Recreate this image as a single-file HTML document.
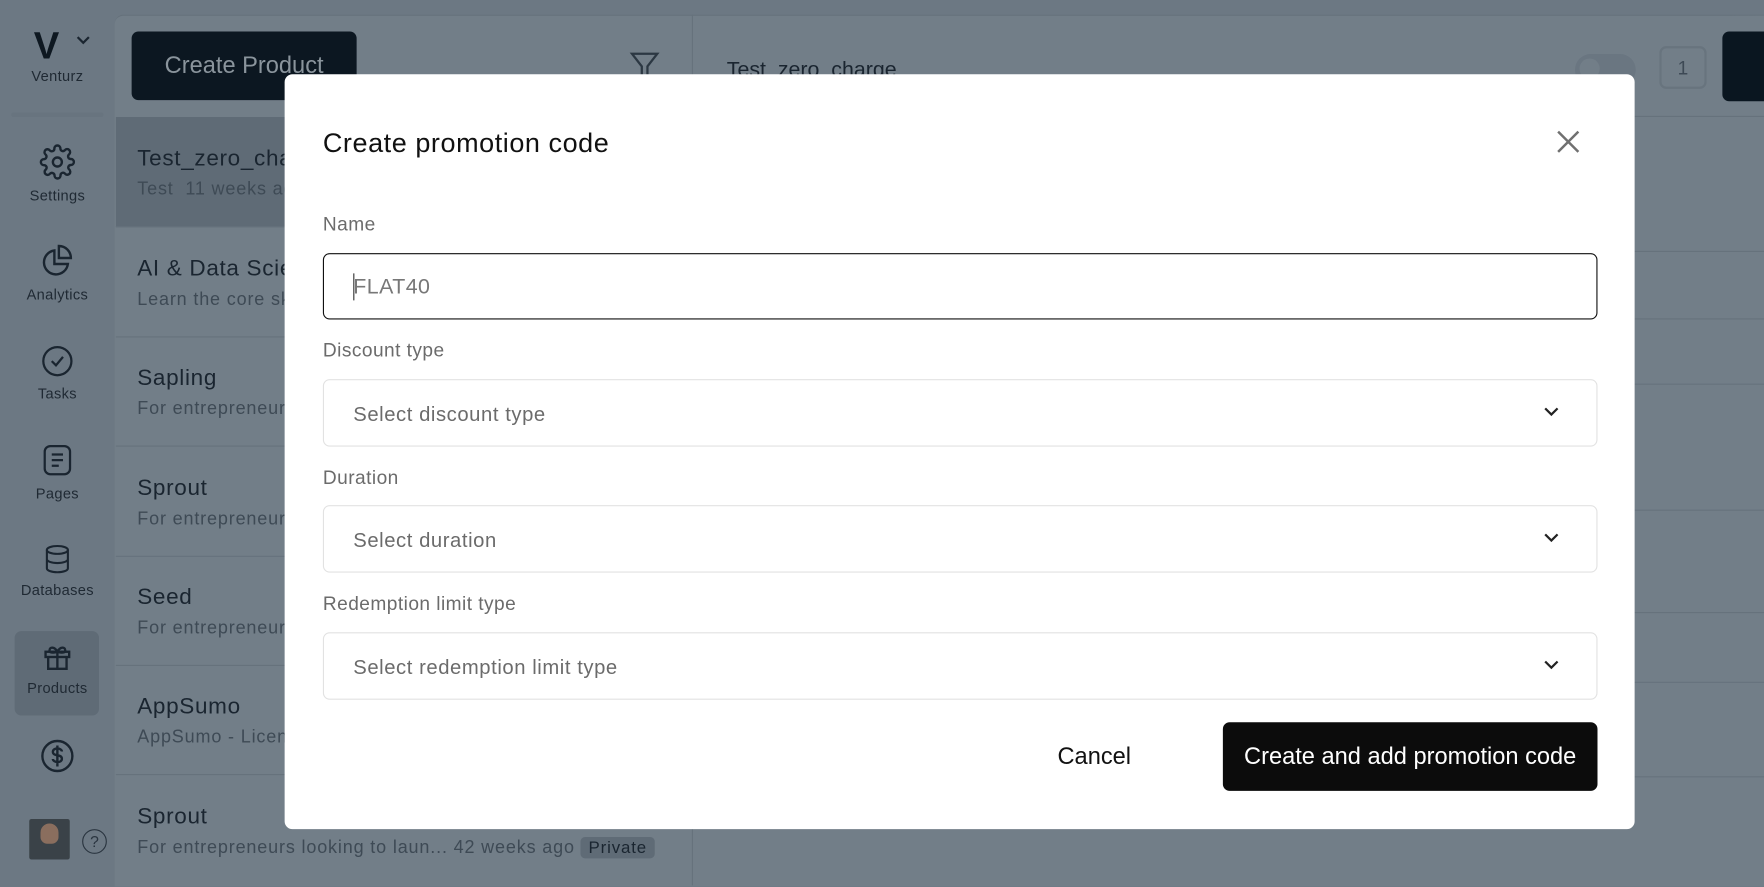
<!DOCTYPE html>
<html><head><meta charset="utf-8"><style>
html,body{margin:0;padding:0;width:1764px;height:885px;overflow:hidden;background:#6c7883;font-family:"Liberation Sans",sans-serif}
#w{position:absolute;left:0;top:0;width:1568px;height:787px;transform:scale(1.125);transform-origin:0 0;background:#6c7883}
.a{position:absolute}
.nav{position:absolute;left:0;width:102px;text-align:center;font-size:13px;color:#1f2933;letter-spacing:0.3px}
.nav svg{display:block;margin:0 auto 6px}
.item{position:absolute;left:103px;width:512px;height:97px;border-bottom:1px solid #66727c}
.item .t{position:absolute;left:19px;top:26px;font-size:20px;color:#1a2530;letter-spacing:0.6px}
.item .s{position:absolute;left:19px;top:56px;font-size:16px;color:#3e4a55;white-space:nowrap;letter-spacing:0.75px}
.lbl{position:absolute;left:287px;font-size:17px;color:#6b6b6b;letter-spacing:0.4px}
.sel{position:absolute;left:287px;width:1131px;height:58px;border:1px solid #e2e2e2;border-radius:6px;background:#fff}
.sel span{position:absolute;left:26px;top:20px;font-size:18px;color:#6b6b6b;letter-spacing:0.5px}
.sel svg{position:absolute;right:33px;top:23px}
.hl{position:absolute;left:616px;width:952px;height:1px;background:#66727c}
</style></head><body><div id="w">
<div class="a" style="left:102px;top:13px;width:1466px;height:774px;background:#727e88;border-top-left-radius:8px;border-top:1px solid #65717b"></div>
<div class="a" style="left:615px;top:13px;width:1px;height:774px;background:#66727c"></div>
<div class="hl" style="top:103px"></div><div class="hl" style="top:223px"></div><div class="hl" style="top:283px"></div><div class="hl" style="top:341px"></div><div class="hl" style="top:453px"></div><div class="hl" style="top:544px"></div><div class="hl" style="top:606px"></div><div class="hl" style="top:690px"></div>
<div class="a" style="left:646px;top:52px;font-size:19px;color:#1a2530">Test_zero_charge</div>
<div class="a" style="left:1400px;top:48px;width:54px;height:28px;border-radius:14px;background:#6a7681"></div>
<div class="a" style="left:1404px;top:52px;width:18px;height:18px;border-radius:9px;background:#727e88"></div>
<div class="a" style="left:1475px;top:41px;width:42px;height:38px;border:2px solid #68747e;border-radius:6px;box-sizing:border-box;text-align:center;line-height:36px;font-size:17px;color:#3d4955">1</div>
<div class="a" style="left:1531px;top:28px;width:60px;height:62px;border-radius:6px;background:#0a1620"></div>
<div class="a" style="left:30px;top:22px;font-size:34px;font-weight:900;color:#0e1821;letter-spacing:-4px">V</div>
<svg class="a" style="left:68px;top:32px" width="12" height="8"><path d="M1 1l5 5 5-5" stroke="#1a2530" stroke-width="2" fill="none"/></svg>
<div class="nav" style="top:60px">Venturz</div>
<div class="a" style="left:10px;top:100px;width:82px;height:4px;background:#68747f;border-radius:2px"></div>
<div class="nav" style="top:128px"><svg width="32" height="32" viewBox="0 0 24 24" fill="none" stroke="#1a2530" stroke-width="1.6"><circle cx="12" cy="12" r="3"/><path d="M19.4 15a1.7 1.7 0 0 0 .3 1.8l.1.1a2 2 0 1 1-2.8 2.8l-.1-.1a1.7 1.7 0 0 0-1.8-.3 1.7 1.7 0 0 0-1 1.5V21a2 2 0 1 1-4 0v-.1a1.7 1.7 0 0 0-1.1-1.5 1.7 1.7 0 0 0-1.8.3l-.1.1a2 2 0 1 1-2.8-2.8l.1-.1a1.7 1.7 0 0 0 .3-1.8 1.7 1.7 0 0 0-1.5-1H3a2 2 0 1 1 0-4h.1a1.7 1.7 0 0 0 1.5-1.1 1.7 1.7 0 0 0-.3-1.8l-.1-.1a2 2 0 1 1 2.8-2.8l.1.1a1.7 1.7 0 0 0 1.8.3H9a1.7 1.7 0 0 0 1-1.5V3a2 2 0 1 1 4 0v.1a1.7 1.7 0 0 0 1 1.5 1.7 1.7 0 0 0 1.8-.3l.1-.1a2 2 0 1 1 2.8 2.8l-.1.1a1.7 1.7 0 0 0-.3 1.8V9a1.7 1.7 0 0 0 1.5 1H21a2 2 0 1 1 0 4h-.1a1.7 1.7 0 0 0-1.5 1z"/></svg>Settings</div>
<div class="nav" style="top:216px"><svg width="32" height="32" viewBox="0 0 24 24" fill="none" stroke="#1a2530" stroke-width="1.6"><path d="M10 5a8 8 0 1 0 9 9h-9z"/><path d="M13 2a8 8 0 0 1 8 8h-8z"/></svg>Analytics</div>
<div class="nav" style="top:306px"><svg width="30" height="30" viewBox="0 0 24 24" fill="none" stroke="#1a2530" stroke-width="1.6"><circle cx="12" cy="12" r="10"/><path d="M8 12l3 3 5-6"/></svg>Tasks</div>
<div class="nav" style="top:393px"><svg width="30" height="32" viewBox="0 0 24 24" fill="none" stroke="#1a2530" stroke-width="1.6"><rect x="3" y="2" width="18" height="20" rx="4"/><path d="M8 8h8M8 12h8M8 16h5"/></svg>Pages</div>
<div class="nav" style="top:483px"><svg width="28" height="28" viewBox="0 0 24 24" fill="none" stroke="#1a2530" stroke-width="1.6"><ellipse cx="12" cy="5" rx="8" ry="3"/><path d="M4 5v14c0 1.7 3.6 3 8 3s8-1.3 8-3V5M4 12c0 1.7 3.6 3 8 3s8-1.3 8-3"/></svg>Databases</div>
<div class="a" style="left:13px;top:561px;width:75px;height:75px;border-radius:6px;background:#5f6b76"></div>
<div class="nav" style="top:570px"><svg width="28" height="28" viewBox="0 0 24 24" fill="none" stroke="#1a2530" stroke-width="1.8"><rect x="3" y="8" width="18" height="4"/><path d="M5 12v9h14v-9M12 8v13M12 8c-2-4-6-4-6-1s6 1 6 1c2-4 6-4 6-1s-6 1-6 1"/></svg>Products</div>
<div class="nav" style="top:656px"><svg width="32" height="32" viewBox="0 0 24 24" fill="none" stroke="#1a2530" stroke-width="1.6"><circle cx="12" cy="12" r="10"/><path d="M15 9c0-1-1.3-2-3-2s-3 .8-3 2.3 1.5 2 3 2.2 3 .8 3 2.3S13.7 16 12 16s-3-1-3-2M12 5v14"/></svg></div>
<div class="a" style="left:26px;top:728px;width:36px;height:36px;background:#3a4248;border-radius:2px"></div>
<div class="a" style="left:36px;top:732px;width:16px;height:18px;background:#8a6e5e;border-radius:8px 8px 6px 6px"></div>
<div class="a" style="left:73px;top:737px;width:20px;height:20px;border:1.5px solid #2a3540;border-radius:50%;text-align:center;line-height:20px;font-size:14px;color:#2a3540">?</div>
<div class="a" style="left:117px;top:28px;width:200px;height:61px;background:#0c1721;border-radius:6px;color:#8a949c;font-size:21px;text-align:center;line-height:61px">Create Product</div>
<svg class="a" style="left:558px;top:44px" width="30" height="30" viewBox="0 0 24 24" fill="none" stroke="#2c3843" stroke-width="1.6"><path d="M3 3h18l-7 9v8l-4 2V12z"/></svg>
<div class="item" style="top:104px;background:#5f6b76"><div class="t">Test_zero_charge</div><div class="s">Test&nbsp; 11 weeks ago</div></div>
<div class="item" style="top:202px"><div class="t">AI &amp; Data Science</div><div class="s">Learn the core skills</div></div>
<div class="item" style="top:299px"><div class="t">Sapling</div><div class="s">For entrepreneurs</div></div>
<div class="item" style="top:397px"><div class="t">Sprout</div><div class="s">For entrepreneurs</div></div>
<div class="item" style="top:494px"><div class="t">Seed</div><div class="s">For entrepreneurs</div></div>
<div class="item" style="top:591px"><div class="t">AppSumo</div><div class="s">AppSumo - License</div></div>
<div class="item" style="top:689px;border:none"><div class="t">Sprout</div><div class="s">For entrepreneurs looking to laun... 42 weeks ago <span style="background:#5f6b76;color:#1a2530;border-radius:4px;padding:1px 7px;font-size:15px">Private</span></div></div>
<div class="a" style="left:253px;top:66px;width:1200px;height:671px;background:#fff;border-radius:7px"></div>
<div class="a" style="left:287px;top:114px;font-size:24px;color:#111;letter-spacing:0.5px">Create promotion code</div>
<svg class="a" style="left:1383px;top:115px" width="22" height="22"><path d="M2 2l18 18M20 2L2 20" stroke="#707070" stroke-width="2.2"/></svg>
<div class="lbl" style="top:190px">Name</div>
<div class="a" style="left:287px;top:225px;width:1133px;height:59px;border:1px solid #111;border-radius:6px;box-sizing:border-box"></div>
<div class="a" style="left:314px;top:243px;width:1px;height:24px;background:#333"></div>
<div class="a" style="left:314px;top:245px;font-size:19px;color:#777;letter-spacing:0.4px">FLAT40</div>
<div class="lbl" style="top:302px">Discount type</div>
<div class="sel" style="top:337px"><span>Select discount type</span><svg width="14" height="10"><path d="M1.5 2l5.5 5.5L12.5 2" stroke="#222" stroke-width="2" fill="none"/></svg></div>
<div class="lbl" style="top:415px">Duration</div>
<div class="sel" style="top:449px"><span>Select duration</span><svg width="14" height="10"><path d="M1.5 2l5.5 5.5L12.5 2" stroke="#222" stroke-width="2" fill="none"/></svg></div>
<div class="lbl" style="top:527px">Redemption limit type</div>
<div class="sel" style="top:562px"><span>Select redemption limit type</span><svg width="14" height="10"><path d="M1.5 2l5.5 5.5L12.5 2" stroke="#222" stroke-width="2" fill="none"/></svg></div>
<div class="a" style="left:940px;top:661px;font-size:21px;color:#111">Cancel</div>
<div class="a" style="left:1087px;top:642px;width:333px;height:61px;background:#0c0c0c;border-radius:6px;color:#fff;font-size:21px;text-align:center;line-height:62px">Create and add promotion code</div>
</div></body></html>
